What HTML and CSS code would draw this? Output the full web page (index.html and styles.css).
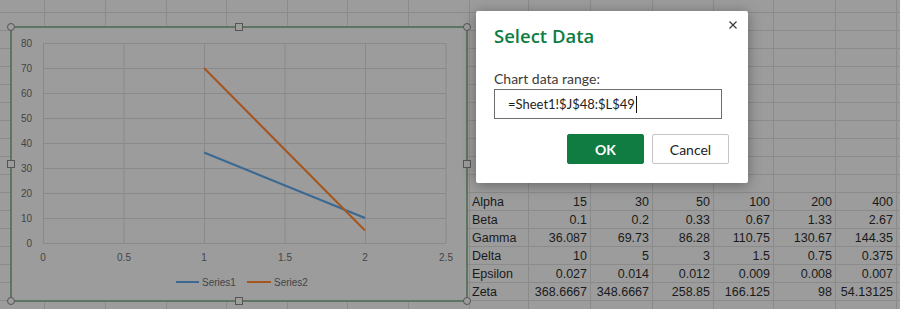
FILE: index.html
```html
<!DOCTYPE html>
<html>
<head>
  <title>Select Data</title>
  <link rel="stylesheet" href="styles.css">
</head>
<body>

  <div id="workspace">
    <div id="sheet"></div>

    <svg id="chart" width="464" height="282" viewBox="7 23 464 282">
      <rect class="chart-area" x="11" y="27" width="456" height="274"/>

      <g class="grid">
        <line x1="43.5" y1="43" x2="43.5" y2="243"/>
        <line x1="124" y1="43" x2="124" y2="243"/>
        <line x1="204.5" y1="43" x2="204.5" y2="243"/>
        <line x1="285" y1="43" x2="285" y2="243"/>
        <line x1="365.5" y1="43" x2="365.5" y2="243"/>
        <line x1="446" y1="43" x2="446" y2="243"/>
        <line x1="43" y1="43.5" x2="446" y2="43.5"/>
        <line x1="43" y1="68.5" x2="446" y2="68.5"/>
        <line x1="43" y1="93.5" x2="446" y2="93.5"/>
        <line x1="43" y1="118.5" x2="446" y2="118.5"/>
        <line x1="43" y1="143.5" x2="446" y2="143.5"/>
        <line x1="43" y1="168.5" x2="446" y2="168.5"/>
        <line x1="43" y1="193.5" x2="446" y2="193.5"/>
        <line x1="43" y1="218.5" x2="446" y2="218.5"/>
        <line x1="43" y1="243.5" x2="446" y2="243.5"/>
      </g>

      <g class="axis-y">
        <text x="32" y="47">80</text>
        <text x="32" y="72">70</text>
        <text x="32" y="97">60</text>
        <text x="32" y="122">50</text>
        <text x="32" y="147">40</text>
        <text x="32" y="172">30</text>
        <text x="32" y="197">20</text>
        <text x="32" y="222">10</text>
        <text x="32" y="247">0</text>
      </g>

      <g class="axis-x">
        <text x="43" y="261">0</text>
        <text x="124" y="261">0.5</text>
        <text x="204" y="261">1</text>
        <text x="285" y="261">1.5</text>
        <text x="365" y="261">2</text>
        <text x="446" y="261">2.5</text>
      </g>

      <line class="series1" x1="204" y1="152.5" x2="365" y2="218"/>
      <line class="series2" x1="204" y1="68" x2="365" y2="230.5"/>

      <g class="legend">
        <line class="series1" x1="176" y1="282" x2="199" y2="282"/>
        <text x="202" y="285.5">Series1</text>
        <line class="series2" x1="247" y1="282" x2="271" y2="282"/>
        <text x="274" y="285.5">Series2</text>
      </g>

      <g class="handles">
        <circle cx="11" cy="27" r="3.5"/>
        <circle cx="467" cy="27" r="3.5"/>
        <circle cx="11" cy="301" r="3.5"/>
        <circle cx="467" cy="301" r="3.5"/>
        <rect x="235.5" y="23.5" width="7" height="7"/>
        <rect x="235.5" y="297.5" width="7" height="7"/>
        <rect x="7.5" y="160.5" width="7" height="7"/>
        <rect x="463.5" y="160.5" width="7" height="7"/>
      </g>
    </svg>

    <div id="select-data" class="dialog">
      <button class="dialog-close" aria-label="Close">
        <svg width="8" height="8" viewBox="0 0 8 8">
          <path d="M0.5 0.5 L7.5 7.5 M7.5 0.5 L0.5 7.5"/>
        </svg>
      </button>
      <div class="dialog-title">Select Data</div>
      <div class="field-label">Chart data range:</div>
      <div class="range-input">=Sheet1!$J$48:$L$49<span class="caret"></span></div>
      <div class="dialog-buttons">
        <button class="btn btn-primary">OK</button>
        <button class="btn">Cancel</button>
      </div>
    </div>
  </div>

  <script>
    const columnCount = 16;
    const rowCount = 18;
    const firstDataRow = 11;
    const labelColumn = 8;

    const tableData = [
      ["Alpha", "15", "30", "50", "100", "200", "400"],
      ["Beta", "0.1", "0.2", "0.33", "0.67", "1.33", "2.67"],
      ["Gamma", "36.087", "69.73", "86.28", "110.75", "130.67", "144.35"],
      ["Delta", "10", "5", "3", "1.5", "0.75", "0.375"],
      ["Epsilon", "0.027", "0.014", "0.012", "0.009", "0.008", "0.007"],
      ["Zeta", "368.6667", "348.6667", "258.85", "166.125", "98", "54.13125"]
    ];

    const sheet = document.getElementById("sheet");

    for (let r = 0; r < rowCount; r++) {
      for (let c = 0; c < columnCount; c++) {
        const cell = document.createElement("div");
        cell.className = "cell";

        const dataRow = tableData[r - firstDataRow];
        const dataCol = c - labelColumn;
        if (dataRow && dataCol >= 0 && dataCol < dataRow.length) {
          cell.textContent = dataRow[dataCol];
          if (dataCol > 0) cell.classList.add("num");
        }
        sheet.appendChild(cell);
      }
    }
  </script>
</body>
</html>
```

FILE: styles.css
```css
body {
  margin: 0;
  background-color: #9c9c9c;
  font-family: "Liberation Sans", Arial, sans-serif;
  overflow: hidden;
}

#workspace {
  position: relative;
  width: 900px;
  height: 309px;
  overflow: hidden;
}

/* Worksheet grid */
#sheet {
  display: grid;
  grid-template-columns: 45px 61px 61px 60px 61px 60px 61px 61px 59px 62px 62px 61px 60px 62px 61px 40px;
  grid-auto-rows: 18px;
  margin-top: -5px;
}

.cell {
  box-sizing: border-box;
  border-right: 1px solid #8b8b8b;
  border-bottom: 1px solid #8b8b8b;
  padding: 1px 2px 0 2px;
  font-size: 12.5px;
  line-height: 17px;
  color: #1a1a1a;
  white-space: nowrap;
  overflow: hidden;
}

.cell.num {
  text-align: right;
  padding-right: 3px;
}

/* Chart object */
#chart {
  position: absolute;
  left: 7px;
  top: 23px;
  font-family: "Liberation Sans", Arial, sans-serif;
  font-size: 10px;
}

.chart-area {
  fill: #9c9c9c;
  stroke: #4a6852;
  stroke-width: 1.5;
}

.grid line {
  stroke: #8a8a8a;
  stroke-width: 1;
}

.axis-y text {
  fill: #444444;
  text-anchor: end;
}

.axis-x text {
  fill: #444444;
  text-anchor: middle;
}

.legend text {
  fill: #444444;
}

.series1 {
  stroke: #3b6893;
  stroke-width: 2;
}

.series2 {
  stroke: #a5561f;
  stroke-width: 2;
}

.handles circle,
.handles rect {
  fill: #9c9c9c;
  stroke: #555555;
  stroke-width: 1;
}

/* Dialog */
.dialog {
  position: absolute;
  left: 476px;
  top: 11px;
  width: 272px;
  box-sizing: border-box;
  padding: 13px 19px 19px 18px;
  background: #ffffff;
  border-radius: 2px;
  box-shadow: 0 2px 14px rgba(0, 0, 0, 0.35);
  font-family: Lato, "Open Sans", sans-serif;
}

.dialog-close {
  position: absolute;
  top: 10px;
  right: 11px;
  width: 8px;
  height: 8px;
  padding: 0;
  border: none;
  background: none;
  display: flex;
}

.dialog-close path {
  stroke: #3a3a3a;
  stroke-width: 1.2;
  fill: none;
}

.dialog-title {
  color: #107c41;
  font-family: "Open Sans", "Noto Sans", sans-serif;
  font-size: 18.5px;
  font-weight: 600;
  line-height: 24px;
}

.field-label {
  margin-top: 22px;
  font-size: 14px;
  line-height: 17px;
  color: #3c3c3c;
}

.range-input {
  margin-top: 2px;
  width: 228px;
  height: 30px;
  box-sizing: border-box;
  border: 1px solid #6e6e6e;
  padding-left: 13px;
  font-size: 13px;
  line-height: 28px;
  color: #1e1e1e;
  display: flex;
  align-items: center;
}

.caret {
  width: 1px;
  height: 17px;
  margin-left: 1px;
  background: #111111;
}

.dialog-buttons {
  margin-top: 15px;
  display: flex;
  justify-content: flex-end;
  gap: 8px;
}

.btn {
  width: 77px;
  height: 30px;
  box-sizing: border-box;
  border: 1px solid #c4c4c4;
  border-radius: 2px;
  background: #ffffff;
  color: #222222;
  font-family: Lato, "Open Sans", sans-serif;
  font-size: 14px;
  padding: 0;
}

.btn-primary {
  background: #107c41;
  border-color: #107c41;
  color: #ffffff;
  font-weight: 700;
}
```
